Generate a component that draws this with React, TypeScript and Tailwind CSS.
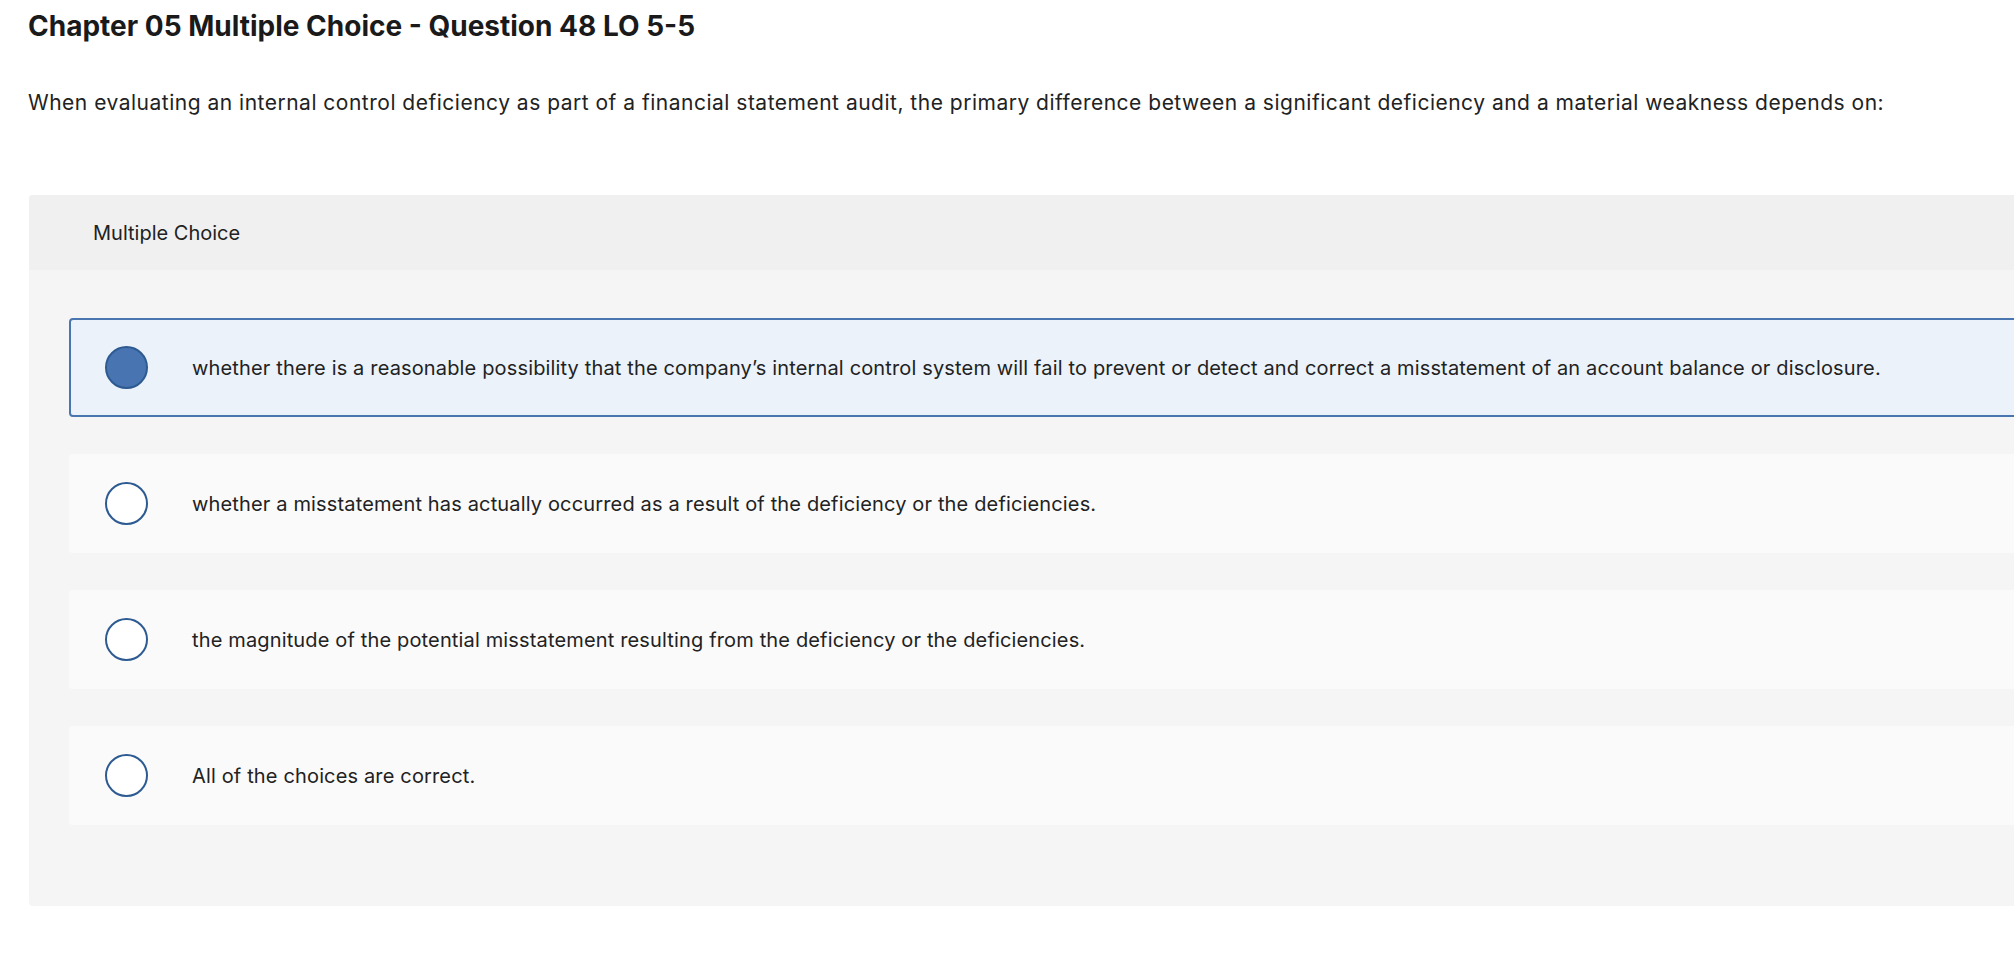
import React, { useState } from "react";

const CHOICES = [
  "whether there is a reasonable possibility that the company\u2019s internal control system will fail to prevent or detect and correct a misstatement of an account balance or disclosure.",
  "whether a misstatement has actually occurred as a result of the deficiency or the deficiencies.",
  "the magnitude of the potential misstatement resulting from the deficiency or the deficiencies.",
  "All of the choices are correct.",
];

export default function App() {
  const [picked, setPicked] = useState(0);

  return (
    <div className="min-h-screen w-full overflow-hidden bg-white text-[#222] font-['Inter','Liberation_Sans',sans-serif]">
      {/* question header */}
      <h1 className="pl-[28px] pt-[9px] text-[28px] leading-[34px] font-bold text-[#1a1a1a]">
        Chapter 05 Multiple Choice - Question 48 LO 5-5
      </h1>
      <p className="pl-[28px] mt-[46px] text-[21px] leading-[28px] tracking-[0.5px]">
        When evaluating an internal control deficiency as part of a financial statement audit, the primary difference between a significant deficiency and a material weakness depends on:
      </p>

      {/* answer panel */}
      <div className="ml-[29px] mt-[78px] w-[2100px] rounded-[4px] bg-[#f5f5f5]">
        <div className="flex h-[75px] items-center rounded-t-[4px] bg-[#f0f0f0] pl-[64px] text-[20px]">
          Multiple Choice
        </div>
        <div className="flex flex-col gap-[37px] pl-[40px] pt-[48px] pb-[81px]">
          {CHOICES.map((c, i) => {
            const on = picked === i;
            return (
              <div
                key={i}
                onClick={() => setPicked(i)}
                className={
                  on
                    ? "flex h-[99px] cursor-pointer items-center rounded-[4px] border-2 border-[#4a76b0] bg-[#ebf2fa] pl-[34px]"
                    : "flex h-[99px] cursor-pointer items-center rounded-[4px] border-2 border-transparent bg-[#fafafa] pl-[34px]"
                }
              >
                <span
                  className={
                    on
                      ? "h-[43px] w-[43px] shrink-0 rounded-full border-2 border-[#2d5b91] bg-[#4874b2]"
                      : "h-[43px] w-[43px] shrink-0 rounded-full border-[2.5px] border-[#2d5b91] bg-white"
                  }
                />
                <span className="ml-[44px] text-[20px] leading-[26px] tracking-[0.15px]">{c}</span>
              </div>
            );
          })}
        </div>
      </div>
    </div>
  );
}
